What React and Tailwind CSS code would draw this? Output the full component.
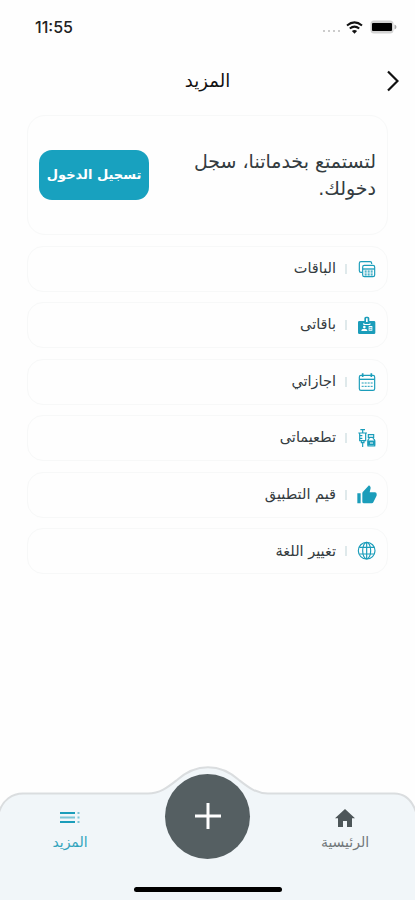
const teal = '#1b9dba';

function PackagesIcon() {
  return (
    <svg viewBox="0 0 60 60" className="h-5 w-5" fill="none" stroke={teal} strokeWidth="3.5">
      <path d="M15 40H12a5 5 0 0 1-5-5V13a5 5 0 0 1 5-5h27a5 5 0 0 1 5 5v2" />
      <rect x="17" y="19" width="36" height="34" rx="5" />
      <path d="M17 30h36" strokeWidth="4" />
      <path d="M23 36.5h6M32 36.5h6M41 36.5h6M23 42h6M32 42h6M41 42h6M23 47.5h6M32 47.5h6M41 47.5h6" strokeWidth="3.4" />
    </svg>
  );
}

function BadgeIcon() {
  return (
    <svg viewBox="0 0 60 60" className="h-5 w-5">
      <path fill={teal} d="M7 18h15V10q0-5 5-5h5q5 0 5 5v8h14q4 0 4 4v31q0 4-4 4H7q-4 0-4-4V22q0-4 4-4z" />
      <path fill="#fff" d="M27 10h5v11h-5zM19 24h3v3h16v-3h2v6H19z" />
      <circle cx="22" cy="36" r="4" fill="#fff" />
      <path fill="#fff" d="M13 48q0-7 9-7t9 7zM35 33h11v14H35z" />
      <path stroke={teal} strokeWidth="2.5" d="M37 38h7M37 43h7" />
    </svg>
  );
}

function CalendarIcon() {
  return (
    <svg viewBox="0 0 60 60" className="h-5 w-5" fill="none" stroke={teal} strokeWidth="3.5">
      <rect x="7" y="10" width="46" height="45" rx="5" />
      <path d="M7 22h46" strokeWidth="4" />
      <path d="M17 4v11M43 4v11" strokeWidth="5" />
      <path d="M14 33h6M23 33h6M32 33h6M41 33h6M14 43h6M23 43h6M32 43h6M41 43h6" strokeWidth="3" />
    </svg>
  );
}

function VaccineIcon() {
  return (
    <svg viewBox="0 0 60 60" className="h-5 w-5" fill="none" stroke={teal} strokeWidth="3.5">
      <path d="M10 5h14M17 5v9M4 15h26M8 15v23h18V15M13 39v5h8v-5M17 44v13M8 23h8M8 31h8" />
      <path d="M34 20h16v8H34zM36 28v4q-3 2-3 5v17h20V37q0-3-4-5v-4" />
      <path fill={teal} d="M33 39h20v12H33z" />
      <path stroke="#fff" strokeWidth="3" d="M39 45h9" />
    </svg>
  );
}

function ThumbIcon() {
  return (
    <svg viewBox="0 0 60 60" className="h-5 w-5" fill={teal}>
      <path d="M1 25h10v30H1zM59 27q0-5-5-5H38l3-13q0-3-2-5l-3-3-18 19q-2 2-2 5v25q0 5 5 5h23q4 0 5-3l9-18q1-2 1-4z" />
    </svg>
  );
}

function GlobeIcon() {
  return (
    <svg viewBox="0 0 60 60" className="h-5 w-5" fill="none" stroke={teal} strokeWidth="3.5">
      <circle cx="29" cy="29" r="25" />
      <ellipse cx="29" cy="29" rx="12" ry="25" />
      <path d="M29 4v50M7 19h44M7 39h44" />
    </svg>
  );
}

const items = [
  { label: 'الباقات', Icon: PackagesIcon, size: 'text-[14.5px]' },
  { label: 'باقاتى', Icon: BadgeIcon, size: 'text-[14.5px]' },
  { label: 'اجازاتي', Icon: CalendarIcon, size: 'text-[14.5px]' },
  { label: 'تطعيماتى', Icon: VaccineIcon, size: 'text-[14.5px]' },
  { label: 'قيم التطبيق', Icon: ThumbIcon, size: 'text-[14.5px]' },
  { label: 'تغيير اللغة', Icon: GlobeIcon, size: 'text-[14.5px]' },
];

function StatusBar() {
  return (
    <div dir="ltr" className="flex h-[54px] items-center justify-between pr-[18px] pl-[35px]">
      <span className="font-['Inter',sans-serif] text-[16px] font-medium text-[#222]">11:55</span>
      <div className="flex items-center">
        <div className="mt-2 mr-[6px] flex gap-[3px]">
          <i className="h-[2px] w-[2px] rounded-full bg-[#bbb]" />
          <i className="h-[2px] w-[2px] rounded-full bg-[#bbb]" />
          <i className="h-[2px] w-[2px] rounded-full bg-[#bbb]" />
          <i className="h-[2px] w-[2px] rounded-full bg-[#bbb]" />
        </div>
        <svg viewBox="0 0 17 13" className="mr-[7px] h-[13px] w-[17px]" fill="none" stroke="#111" strokeWidth="2">
          <path d="M1 4.6Q8.5-1.8 16 4.6M3.8 7.6Q8.5 3.6 13.2 7.6" />
          <path d="M5.9 10Q8.5 8 11.1 10L8.5 12.8z" fill="#111" stroke="none" />
        </svg>
        <svg viewBox="0 0 27 14" className="h-[14px] w-[27px]">
          <rect x="0.5" y="0.5" width="23" height="13" rx="3.5" fill="#d2d2d2" />
          <path d="M24.5 4.5q2 .6 2 2.5t-2 2.5z" fill="#aaa" />
          <rect x="2" y="3" width="20" height="8" rx="1" fill="#000" />
        </svg>
      </div>
    </div>
  );
}

function BottomNav() {
  return (
    <nav className="relative mt-auto h-[137px] w-full">
      <svg viewBox="0 0 415 137" className="absolute inset-0 h-full w-full">
        <path
          d="M-1 49C3 37 12 30.500 23 30.500H148C160 30.500 168 24 177 17C196 0 220 0 239 17C248 24 256 30.500 268 30.500H394C405 30.500 412 37 416 49V140H-1Z"
          fill="#f1f6f9" stroke="#dadddf" strokeWidth="2"
        />
      </svg>
      <div className="relative flex justify-between px-[25px] pt-[10.500px]">
        <div className="flex w-[90px] flex-col items-center pt-[35px] text-[#4d5659]">
          <svg viewBox="0 0 20 18" className="h-[18px] w-5" fill="currentColor">
            <path d="M10 0L0 9.200h3V18h5v-6h4v6h5V9.200h3z" />
          </svg>
          <span className="mt-[5px] text-[14px] leading-5 whitespace-nowrap text-[#71787b]">الرئيسية</span>
        </div>
        <div className="flex h-[85px] w-[85px] items-center justify-center rounded-full bg-[#555f62]">
          <svg viewBox="0 0 26 26" className="h-[26px] w-[26px]" stroke="#fff" strokeWidth="3">
            <path d="M13 0v26M0 13h26" />
          </svg>
        </div>
        <div className="flex w-[90px] flex-col items-center pt-[35px] text-[#31a4bd]">
          <svg viewBox="0 0 20 18" className="h-[18px] w-5" fill="none" stroke="#1b9dba" strokeWidth="2">
            <path d="M0 4h15M0 13h15" />
            <path d="M0 8.500h15M17.500 4h2M17.500 8.500h2M17.500 13h2" strokeOpacity="0.55" />
          </svg>
          <span className="mt-[5px] text-[14px] leading-5 whitespace-nowrap">المزيد</span>
        </div>
      </div>
      <div className="absolute bottom-[8px] left-[134px] h-[5px] w-[148px] rounded-full bg-black" />
    </nav>
  );
}

export default function App() {
  return (
    <div dir="rtl" className="flex h-[900px] w-[415px] flex-col overflow-hidden bg-[#fefefe] font-['DejaVu_Sans',sans-serif] text-[#333b40]">
      <StatusBar />
      <header className="flex h-[53px] items-center px-4">
        <svg viewBox="0 0 13 22" className="h-[22px] w-[13px]" fill="none" stroke="#111" strokeWidth="2.2">
          <path d="M2 1.500L11.500 11L2 20.500" />
        </svg>
        <h1 className="flex-1 pl-[13px] text-center text-[18px] leading-7 text-[#111]">المزيد</h1>
      </header>
      <section className="mx-[27px] mt-[8px] flex h-[120px] items-center justify-between rounded-[18px] border border-[#f7f8f8] pr-[11px] pl-[11px]">
        <p className="text-[19px] leading-[27px] whitespace-nowrap">
          لتستمتع بخدماتنا، سجل<br />دخولك.
        </p>
        <button className="h-[50px] w-[110px] rounded-[13px] bg-[#18a1bf] text-[13px] font-bold whitespace-nowrap text-white">تسجيل الدخول</button>
      </section>
      <ul className="mx-[27px] mt-[10.500px] flex flex-col gap-[10.600px]">
        {items.map(({ label, Icon, size }) => (
          <li key={label} className="flex h-[46px] items-center rounded-[16px] border border-[#f7f8f8] pr-[10px]">
            <Icon />
            <span className="mr-[10px] h-[10px] w-[2px] bg-[#dfe9eb]" />
            <span className={`mr-[9px] whitespace-nowrap ${size}`}>{label}</span>
          </li>
        ))}
      </ul>
      <BottomNav />
    </div>
  );
}
